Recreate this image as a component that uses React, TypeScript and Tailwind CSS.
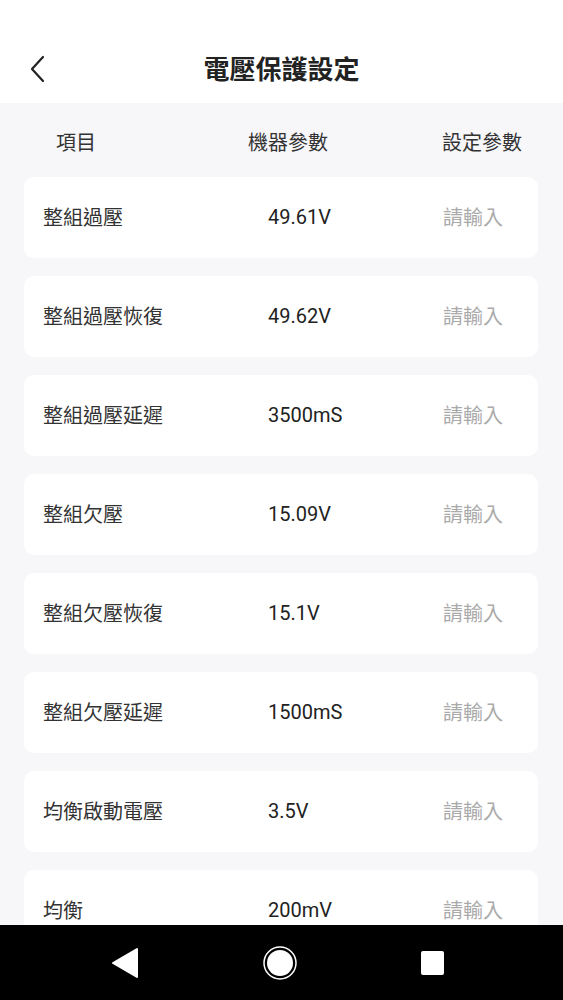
import React from "react";

const rows: [string, string][] = [
  ["整組過壓", "49.61V"],
  ["整組過壓恢復", "49.62V"],
  ["整組過壓延遲", "3500mS"],
  ["整組欠壓", "15.09V"],
  ["整組欠壓恢復", "15.1V"],
  ["整組欠壓延遲", "1500mS"],
  ["均衡啟動電壓", "3.5V"],
  ["均衡", "200mV"],
];

const font = { fontFamily: '"Noto Sans CJK TC", "Noto Sans", sans-serif' };

export default function App() {
  return (
    <div
      className="w-[563px] h-[1000px] flex flex-col overflow-hidden bg-[#f7f6f9]"
      style={font}
    >
      <div className="flex-1 overflow-hidden flex flex-col">
        <div className="h-[103px] shrink-0 bg-white pt-[45px]">
          <div className="relative h-[46px] flex items-center justify-center">
            <svg
              className="absolute left-[28px] top-[10px]"
              width="18"
              height="28"
              viewBox="0 0 18 28"
              fill="none"
            >
              <path
                d="M15 2 L4 14 L15 26"
                stroke="#222"
                strokeWidth="2.2"
                strokeLinecap="round"
                strokeLinejoin="round"
              />
            </svg>
            <span className="text-[26px] font-bold text-[#222] leading-none">
              電壓保護設定
            </span>
          </div>
        </div>
        <div className="flex pt-[25px] pb-[21px] text-[20px] leading-[28px] text-[#333]">
          <span className="w-[248px] pl-[56px]">項目</span>
          <span className="w-[194px]">機器參數</span>
          <span>設定參數</span>
        </div>
        <div className="flex flex-col gap-[18px] pl-[24px] pr-[25px]">
          {rows.map(([label, value]) => (
            <div
              key={label}
              className="h-[81px] shrink-0 bg-white rounded-[10px] flex items-center pl-[19px] pb-[2px] text-[20px] leading-[28px]"
            >
              <span className="w-[225px] text-[#333]">{label}</span>
              <span
                className="w-[175px] text-[#222]"
                style={{ fontFamily: 'Roboto, "Noto Sans CJK TC", sans-serif' }}
              >
                {value}
              </span>
              <span className="text-[#aaaaaa]">請輸入</span>
            </div>
          ))}
        </div>
      </div>
      <div className="h-[75px] shrink-0 bg-black flex items-center justify-center">
        <div className="w-full flex items-center justify-between pl-[111px] pr-[119px]">
          <svg width="28" height="32" viewBox="0 0 28 32">
            <path d="M26 2 L26 30 L2 16 Z" fill="#fff" stroke="#fff" strokeWidth="2" strokeLinejoin="round" />
          </svg>
          <svg width="36" height="36" viewBox="0 0 36 36">
            <circle cx="18" cy="18" r="16" fill="none" stroke="#fff" strokeWidth="1.5" />
            <circle cx="18" cy="18" r="13" fill="#fff" />
          </svg>
          <div className="w-[23px] h-[24px] bg-white rounded-[2px]" />
        </div>
      </div>
    </div>
  );
}
